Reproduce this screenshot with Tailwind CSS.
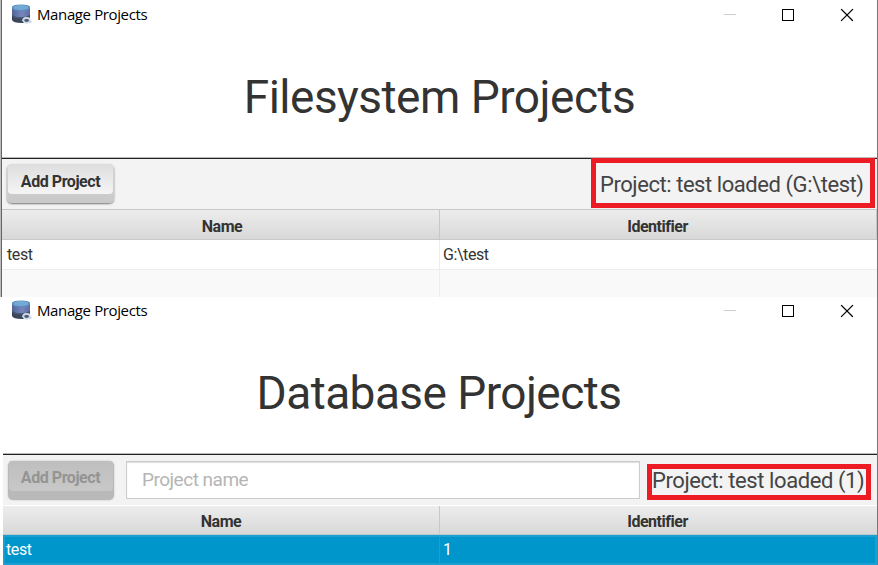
<!DOCTYPE html>
<html lang="en">
<head>
<meta charset="utf-8">
<title>Manage Projects</title>
<script src="https://cdn.jsdelivr.net/npm/@tailwindcss/browser@4"></script>
</head>
<body class="w-[878px] h-[565px] overflow-hidden bg-white font-['Roboto',sans-serif] text-[#333]">
<svg width="0" height="0" class="absolute">
  <defs>
    <linearGradient id="side" x1="0" x2="1" y1="0" y2="0"><stop offset="0" stop-color="#536394"/><stop offset=".55" stop-color="#7486bd"/><stop offset="1" stop-color="#5d6d9d"/></linearGradient>
    <symbol id="db" viewBox="0 0 20 20">
      <path d="M0 3V16Q1 19 9.500 19Q17 19 18 17V3Z" fill="#3b465b"/>
      <path d="M0 4V10.500Q2 13.500 9 13.500Q16 13.500 18 10.500V4Z" fill="url(#side)"/>
      <path d="M0 10.500Q1 13.500 9 13.500Q17 13.500 18 10.500V12.500Q16 15 9 15Q2 15 0 12.500Z" fill="#47546f"/>
      <path d="M0 3Q0 .5 9 .5Q18 .5 18 3V4.500Q17 7 9 7Q1 7 0 4.500Z" fill="#5b8dbd"/>
      <ellipse cx="9" cy="3.500" rx="7.500" ry="2.400" fill="#75a9d5"/>
      <ellipse cx="14.600" cy="16.300" rx="3.300" ry="2.500" fill="#4c5c75" stroke="#d3deeb" stroke-width="1.700"/>
      <path d="M10 16.500l2-.5M17.500 17.500l2 1" stroke="#c1cfdf" stroke-width="1.400"/>
    </symbol>
  </defs>
</svg>

<section class="flex h-[297px]">
  <div class="w-[2px] bg-[#bbb] border-r border-[#666]"></div>
  <div class="w-[875px] flex flex-col">
    <header class="h-[30px] flex items-center pl-[10px] text-black">
      <svg class="w-5 h-5 -mt-[2px]"><use href="#db"/></svg>
      <span class="ml-[5px] -mt-[2px] w-[120px] whitespace-nowrap font-['Open_Sans',sans-serif] text-[15px] tracking-[-0.380px]">Manage Projects</span>
      <svg class="ml-[565px]" width="132" height="14" viewBox="0 0 132 14" fill="none" shape-rendering="crispEdges"><path d="M2 6.500h12" stroke="#ccc"/><rect x="60.500" y="1.500" width="11" height="11" stroke="#000"/><path d="M119.500 1.500l11 11M130.500 1.500l-11 11" stroke="#000" stroke-width="1.200" stroke-linecap="square" shape-rendering="auto"/></svg>
    </header>
    <h1 class="h-[127px] flex items-center justify-center pt-[8px] text-[46px] tracking-[-0.520px] whitespace-nowrap">Filesystem Projects</h1>
    <div class="h-[2px] border-t border-[#bbb] bg-[#222]"></div>
    <div class="h-[50px] bg-[#f3f3f3] flex items-start pl-[5px] pt-[5px] relative">
      <button class="w-[107px] h-[39px] rounded-[5px] bg-gradient-to-b from-[#d5d5d5] to-[#c9c9c9] shadow-[0_1px_2px_#777] px-px pb-[9px] text-[16px] tracking-[-0.450px] font-bold text-[#333]"><span class="flex h-[30px] items-center justify-center pt-[5px] rounded-[4px] bg-gradient-to-b from-[#dedede] to-[#f5f5f5] whitespace-nowrap">Add Project</span></button>
      <div class="absolute left-[589px] -top-px w-[284px] h-[50px] border-[5px] border-[#ed1c24] flex items-center pl-[4px] pt-[3px] text-[22px] tracking-[-0.440px] text-[#444] whitespace-nowrap">Project: test loaded (G:\test)</div>
    </div>
    <div class="h-[31px] grid grid-cols-[438px_437px] border-y border-[#c8c8c8] bg-gradient-to-b from-[#ededed] to-[#d8d8d8] text-[16px] tracking-[-0.480px] font-bold text-center leading-[33px]"><div class="border-r border-[#c8c8c8] pl-[3px] h-[29px]">Name</div><div class="border-r border-[#c8c8c8] h-[29px] pr-px">Identifier</div></div>
    <div class="h-[30px] grid grid-cols-[438px_437px] border-b border-[#ededed] text-[16px] tracking-[-0.420px] leading-[30px]"><div class="border-r border-[#ededed] pl-[5px]">test</div><div class="pl-[3px]">G:\test</div></div>
    <div class="h-[27px] grid grid-cols-[438px_437px] bg-[#f9f9f9]"><div class="border-r border-[#ededed]"></div><div></div></div>
  </div>
  <div class="w-px bg-[#777]"></div>
</section>

<section class="flex h-[268px]">
  <div class="w-[3px]"></div>
  <div class="w-[874px] flex flex-col">
    <header class="h-[28px] flex items-center pl-[9px] text-black">
      <svg class="w-5 h-5 -mt-[2px]"><use href="#db"/></svg>
      <span class="ml-[5px] -mt-[2px] w-[120px] whitespace-nowrap font-['Open_Sans',sans-serif] text-[15px] tracking-[-0.380px]">Manage Projects</span>
      <svg class="ml-[565px]" width="132" height="14" viewBox="0 0 132 14" fill="none" shape-rendering="crispEdges"><path d="M2 6.500h12" stroke="#ccc"/><rect x="60.500" y="1.500" width="11" height="11" stroke="#000"/><path d="M119.500 1.500l11 11M130.500 1.500l-11 11" stroke="#000" stroke-width="1.200" stroke-linecap="square" shape-rendering="auto"/></svg>
    </header>
    <h1 class="h-[128px] flex items-center justify-center pt-[8px] pr-[2px] text-[46px] tracking-[-0.560px] whitespace-nowrap">Database Projects</h1>
    <div class="h-[2px] border-t border-[#bbb] bg-[#222]"></div>
    <div class="h-[50px] bg-[#f3f3f3] flex items-start pl-[5px] pt-[6px] relative">
      <button disabled class="w-[106px] h-[39px] rounded-[5px] bg-[#b9b9b9] shadow-[0_0_2px_#bbb] px-px pb-[9px] text-[16px] tracking-[-0.450px] font-bold text-[#949494]"><span class="flex h-[30px] items-center justify-center pt-[4px] pr-px rounded-[4px] bg-gradient-to-b from-[#bebebe] to-[#c8c8c8] whitespace-nowrap">Add Project</span></button>
      <div class="ml-[12px] w-[514px] h-[38px] border border-[#ccc] bg-white shadow-[inset_0_1px_1px_#ddd] pl-[15px] text-[19px] tracking-[-0.500px] leading-[36px] text-[#b5b5b5]">Project name</div>
      <div class="absolute left-[644px] top-[9px] w-[224px] h-[36px] border-[5px] border-[#ed1c24] flex items-center pb-[3px] text-[22px] tracking-[-0.420px] text-[#444] whitespace-nowrap">Project: test loaded (1)</div>
    </div>
    <div class="h-[30px] grid grid-cols-[437px_437px] border-t border-white border-b border-b-[#bfc8cc] bg-gradient-to-b from-[#ededed] to-[#d8d8d8] text-[16px] tracking-[-0.480px] font-bold text-center leading-[31px]"><div class="border-r border-[#c8c8c8] h-[28px]">Name</div><div class="h-[28px] pr-[2px]">Identifier</div></div>
    <div class="h-[30px] grid grid-cols-[435px_435px] bg-[#0095cb] text-white text-[16px] tracking-[-0.400px] leading-[26px] border-2 border-[#1a9fd0]"><div class="border-r border-[#1a9fd0] pl-px">test</div><div class="pl-[3px]">1</div></div>
  </div>
  <div class="w-px bg-[#777]"></div>
</section>
</body>
</html>
